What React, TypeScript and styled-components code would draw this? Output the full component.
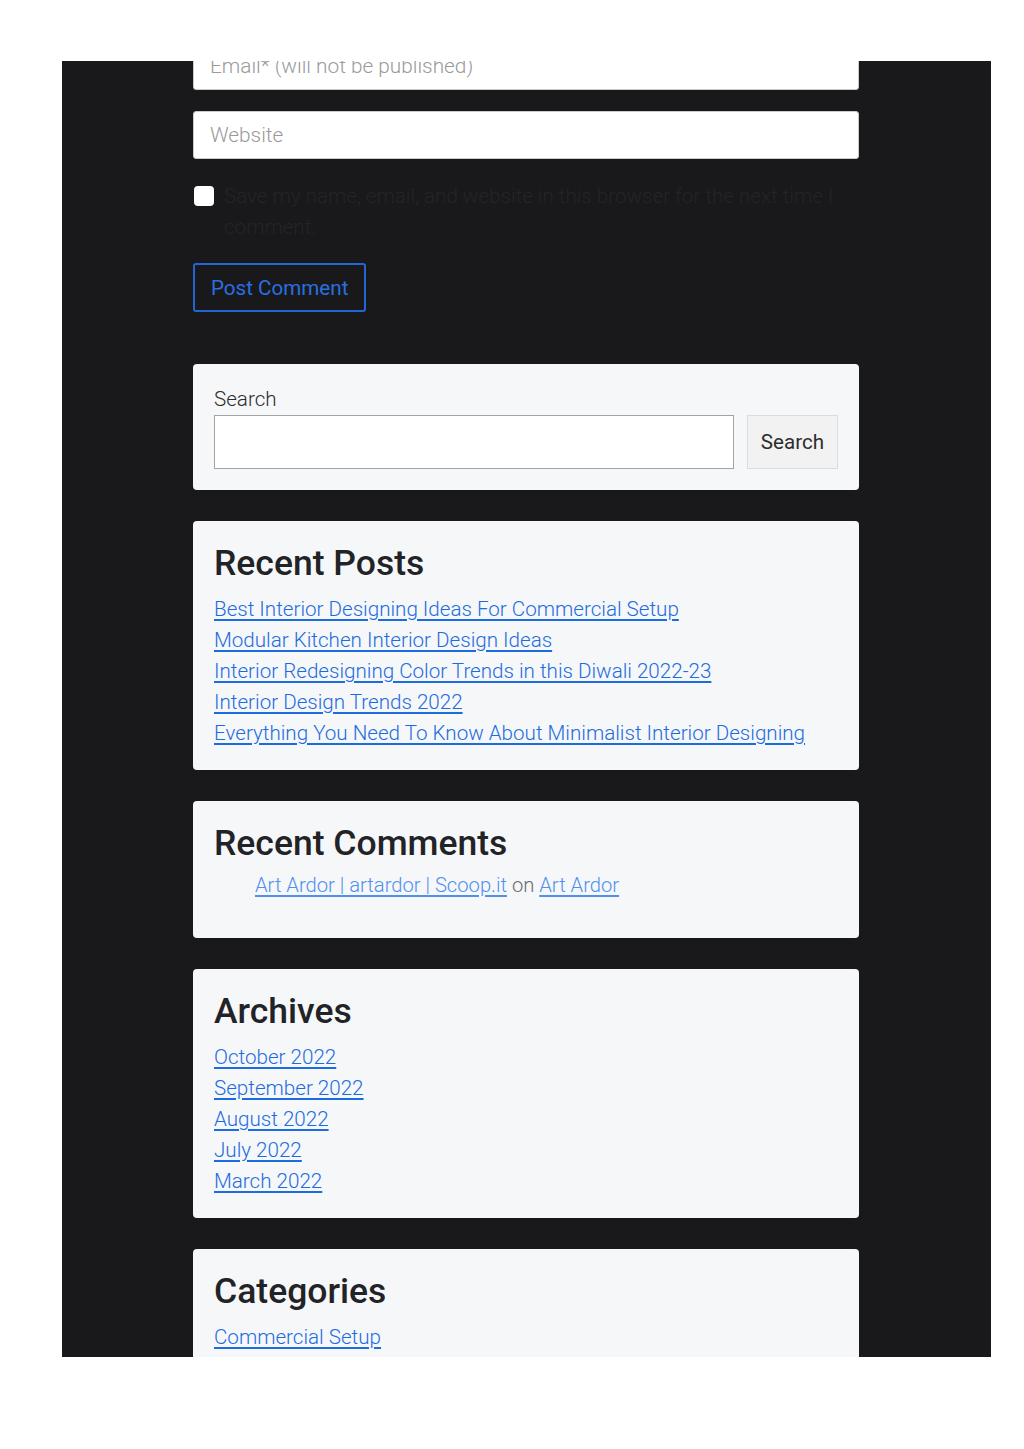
import styled, { createGlobalStyle } from "styled-components";

const GlobalStyle = createGlobalStyle`
	* {
		box-sizing: border-box;
	}
	body {
		margin: 0;
		background: #ffffff;
		font-family: Roboto, "Noto Sans", Arial, sans-serif;
	}
`;

const recentPosts = [
	"Best Interior Designing Ideas For Commercial Setup",
	"Modular Kitchen Interior Design Ideas",
	"Interior Redesigning Color Trends in this Diwali 2022-23",
	"Interior Design Trends 2022",
	"Everything You Need To Know About Minimalist Interior Designing",
];

const archives = ["October 2022", "September 2022", "August 2022", "July 2022", "March 2022"];

export default function App() {
	return (
		<>
			<GlobalStyle />
			<PageStyled>
				<ColumnStyled>
					<FormStyled>
						<FieldStyled placeholder='Email* (will not be published)' />
						<FieldStyled placeholder='Website' />
						<ConsentStyled>
							<CheckboxStyled />
							<span>Save my name, email, and website in this browser for the next time I comment.</span>
						</ConsentStyled>
						<SubmitStyled>Post Comment</SubmitStyled>
					</FormStyled>

					<WidgetStyled $pad='20px 21px 21px'>
						<SearchLabelStyled>Search</SearchLabelStyled>
						<SearchRowStyled>
							<SearchInputStyled />
							<SearchButtonStyled>Search</SearchButtonStyled>
						</SearchRowStyled>
					</WidgetStyled>

					<WidgetStyled>
						<TitleStyled>Recent Posts</TitleStyled>
						<ListStyled>
							{recentPosts.map((post) => (
								<li key={post}>
									<LinkStyled href='#'>{post}</LinkStyled>
								</li>
							))}
						</ListStyled>
					</WidgetStyled>

					<WidgetStyled $pad='22px 21px 37px'>
						<TitleStyled>Recent Comments</TitleStyled>
						<ListStyled $indent>
							<li>
								<LinkStyled href='#' $soft>
									Art Ardor | artardor | Scoop.it
								</LinkStyled>{" "}
								<OnStyled>on</OnStyled>{" "}
								<LinkStyled href='#' $soft>
									Art Ardor
								</LinkStyled>
							</li>
						</ListStyled>
					</WidgetStyled>

					<WidgetStyled>
						<TitleStyled>Archives</TitleStyled>
						<ListStyled>
							{archives.map((month) => (
								<li key={month}>
									<LinkStyled href='#'>{month}</LinkStyled>
								</li>
							))}
						</ListStyled>
					</WidgetStyled>

					<WidgetStyled>
						<TitleStyled>Categories</TitleStyled>
						<ListStyled>
							<li>
								<LinkStyled href='#'>Commercial Setup</LinkStyled>
							</li>
						</ListStyled>
					</WidgetStyled>
				</ColumnStyled>
			</PageStyled>
		</>
	);
}

const PageStyled = styled.div`
	margin: 61px 0 0 62px;
	width: 929px;
	height: 1296px;
	overflow: hidden;
	background-color: #19191b;
`;

const ColumnStyled = styled.div`
	width: 666px;
	margin: -19px auto 0 131px;
	display: flex;
	flex-direction: column;
	gap: 31px;
`;

const FormStyled = styled.div`
	display: flex;
	flex-direction: column;
	padding-bottom: 21px;
`;

const FieldStyled = styled.input`
	width: 100%;
	height: 48px;
	margin-bottom: 21px;
	padding: 0 16px;
	border: 1px solid #c9c9c9;
	border-radius: 3px;
	background: #ffffff;
	font-family: Roboto, sans-serif;
	font-size: 20.8px;
	font-weight: 300;
	color: #333;
	&::placeholder {
		color: #9a9a9a;
	}
`;

const ConsentStyled = styled.label`
	display: flex;
	gap: 10px;
	align-items: flex-start;
	padding-right: 10px;
	font-size: 20.6px;
	font-weight: 300;
	line-height: 31px;
	color: #242427;
	margin-top: 1px;
`;

const CheckboxStyled = styled.span`
	flex: none;
	width: 20px;
	height: 20px;
	margin: 5px 0 0 1px;
	border-radius: 4px;
	background: #ffffff;
`;

const SubmitStyled = styled.button`
	align-self: flex-start;
	margin-top: 20px;
	height: 49px;
	padding: 0 16px;
	border: 2px solid #2266d6;
	border-radius: 3px;
	background: transparent;
	color: #2a6fe0;
	font-family: Roboto, sans-serif;
	font-size: 20.6px;
	font-weight: 400;
`;

const WidgetStyled = styled.section<{ $pad?: string }>`
	padding: ${(p) => p.$pad ?? "22px 21px 21px"};
	background: #f6f7f9;
	border-radius: 4px;
`;

const SearchLabelStyled = styled.div`
	font-size: 20.6px;
	font-weight: 300;
	line-height: 31px;
	color: #2b2b2b;
`;

const SearchRowStyled = styled.div`
	display: flex;
	gap: 13px;
`;

const SearchInputStyled = styled.input`
	flex: 1;
	height: 54px;
	border: 1.5px solid #a3a3a3;
	background: #ffffff;
	border-radius: 0;
`;

const SearchButtonStyled = styled.button`
	width: 91px;
	height: 54px;
	border: 1.5px solid #dcdcdc;
	background: #f2f2f2;
	color: #2e2e2e;
	font-family: Roboto, sans-serif;
	font-size: 20.6px;
	font-weight: 400;
`;

const TitleStyled = styled.h2`
	margin: 0 0 10px;
	font-size: 35.5px;
	font-weight: 500;
	line-height: 41px;
	color: #222326;
`;

const ListStyled = styled.ul<{ $indent?: boolean }>`
	margin: ${(p) => (p.$indent ? "-4px 0 0" : "0")};
	padding: 0 0 0 ${(p) => (p.$indent ? "41px" : "0")};
	list-style: none;
	font-size: ${(p) => (p.$indent ? "20.2px" : "20.6px")};
	font-weight: 300;
	line-height: 31px;
`;

const LinkStyled = styled.a<{ $soft?: boolean }>`
	color: ${(p) => (p.$soft ? "#4f8fee" : "#1c6ce0")};
	text-decoration: underline;
	text-underline-offset: 3px;
`;

const OnStyled = styled.span`
	color: #6b6b6b;
`;
